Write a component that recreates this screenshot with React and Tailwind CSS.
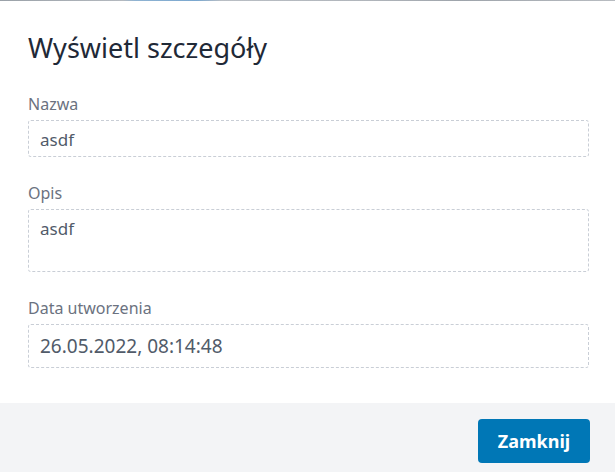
const Field = ({ label, value, boxClass, valueClass }) => (
  <div>
    <label className="block text-[16px] leading-[20px] text-[#6b7280]">{label}</label>
    <div className={`mt-[6px] rounded-[3px] border border-dashed border-[#c9ced6] pl-[11px] ${boxClass}`}>
      <p className={valueClass}>{value}</p>
    </div>
  </div>
);

export default function App() {
  return (
    <div className="w-[615px] h-[472px] bg-white font-['Noto_Sans','Open_Sans',sans-serif] overflow-hidden flex flex-col">
      {/* backdrop seam */}
      <div className="h-px bg-[linear-gradient(90deg,#9aa1a8_0%,#b4b9bf_20%,#8fb3d2_22%,#7aa7cf_32%,#b9bec4_36%,#b0b5bb_60%,#9ea4ab_75%,#b8bcc1_100%)]" />

      <div className="flex-1 pl-[28px] pr-[26px] pt-[29px]">
        <h1 className="text-[27px] leading-[36px] text-[#1f2937]">Wyświetl szczegóły</h1>

        <div className="mt-[28px] flex flex-col gap-[26px]">
          <Field
            label="Nazwa"
            value="asdf"
            boxClass="h-[37px] pt-[7px]"
            valueClass="text-[17px] leading-[24px] text-[#515b69]"
          />
          <Field
            label="Opis"
            value="asdf"
            boxClass="h-[63px] pt-[7px]"
            valueClass="text-[17px] leading-[24px] text-[#515b69]"
          />
          <Field
            label="Data utworzenia"
            value="26.05.2022, 08:14:48"
            boxClass="h-[44px] pt-[7px]"
            valueClass="text-[19px] leading-[28px] text-[#515b69]"
          />
        </div>
      </div>

      <div className="h-[69px] bg-[#f3f4f6] flex justify-end items-start pt-[16px] pr-[25px]">
        <button className="h-[44px] w-[112px] rounded-[4px] bg-[#0077b6] text-white text-[18px] font-bold">
          Zamknij
        </button>
      </div>
    </div>
  );
}
